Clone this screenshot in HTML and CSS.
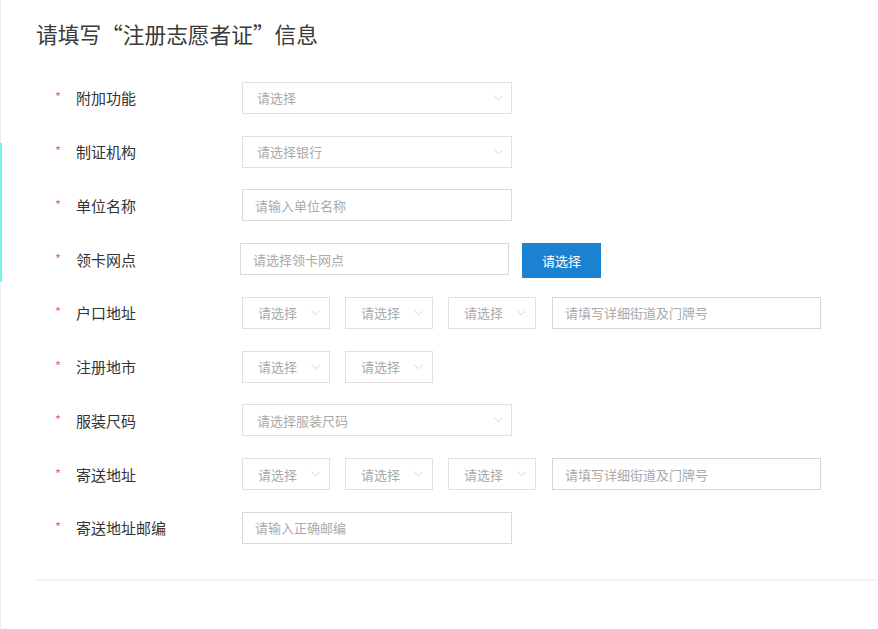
FILE: index.html
```html
<!DOCTYPE html>
<html lang="zh-CN">
<head>
<meta charset="utf-8">
<title>注册志愿者证</title>
<link rel="stylesheet" href="styles.css">
</head>
<body>
<div class="page">
  <div class="edge-mark"></div>
  <h1 class="title">请填写“注册志愿者证”信息</h1>
  <div class="form">
    <div class="row">
      <div class="label"><span class="star">*</span>附加功能</div>
      <div class="controls">
        <div class="select wide"><span>请选择</span><svg class="chev" viewBox="0 0 10 6"><polyline points="0.5,0.5 5,5 9.5,0.5"/></svg></div>
      </div>
    </div>
    <div class="row">
      <div class="label"><span class="star">*</span>制证机构</div>
      <div class="controls">
        <div class="select wide"><span>请选择银行</span><svg class="chev" viewBox="0 0 10 6"><polyline points="0.5,0.5 5,5 9.5,0.5"/></svg></div>
      </div>
    </div>
    <div class="row">
      <div class="label"><span class="star">*</span>单位名称</div>
      <div class="controls">
        <div class="input wide">请输入单位名称</div>
      </div>
    </div>
    <div class="row">
      <div class="label"><span class="star">*</span>领卡网点</div>
      <div class="controls">
        <div class="input wide shift">请选择领卡网点</div>
        <div class="btn">请选择</div>
      </div>
    </div>
    <div class="row">
      <div class="label"><span class="star">*</span>户口地址</div>
      <div class="controls">
        <div class="select small"><span>请选择</span><svg class="chev" viewBox="0 0 10 6"><polyline points="0.5,0.5 5,5 9.5,0.5"/></svg></div>
        <div class="select small"><span>请选择</span><svg class="chev" viewBox="0 0 10 6"><polyline points="0.5,0.5 5,5 9.5,0.5"/></svg></div>
        <div class="select small"><span>请选择</span><svg class="chev" viewBox="0 0 10 6"><polyline points="0.5,0.5 5,5 9.5,0.5"/></svg></div>
        <div class="input street">请填写详细街道及门牌号</div>
      </div>
    </div>
    <div class="row">
      <div class="label"><span class="star">*</span>注册地市</div>
      <div class="controls">
        <div class="select small"><span>请选择</span><svg class="chev" viewBox="0 0 10 6"><polyline points="0.5,0.5 5,5 9.5,0.5"/></svg></div>
        <div class="select small"><span>请选择</span><svg class="chev" viewBox="0 0 10 6"><polyline points="0.5,0.5 5,5 9.5,0.5"/></svg></div>
      </div>
    </div>
    <div class="row">
      <div class="label"><span class="star">*</span>服装尺码</div>
      <div class="controls">
        <div class="select wide"><span>请选择服装尺码</span><svg class="chev" viewBox="0 0 10 6"><polyline points="0.5,0.5 5,5 9.5,0.5"/></svg></div>
      </div>
    </div>
    <div class="row">
      <div class="label"><span class="star">*</span>寄送地址</div>
      <div class="controls">
        <div class="select small"><span>请选择</span><svg class="chev" viewBox="0 0 10 6"><polyline points="0.5,0.5 5,5 9.5,0.5"/></svg></div>
        <div class="select small"><span>请选择</span><svg class="chev" viewBox="0 0 10 6"><polyline points="0.5,0.5 5,5 9.5,0.5"/></svg></div>
        <div class="select small"><span>请选择</span><svg class="chev" viewBox="0 0 10 6"><polyline points="0.5,0.5 5,5 9.5,0.5"/></svg></div>
        <div class="input street">请填写详细街道及门牌号</div>
      </div>
    </div>
    <div class="row">
      <div class="label"><span class="star">*</span>寄送地址邮编</div>
      <div class="controls">
        <div class="input wide">请输入正确邮编</div>
      </div>
    </div>
  </div>
  <div class="divider"></div>
</div>
</body>
</html>
```

FILE: styles.css
```css
* { box-sizing: border-box; }
html, body { margin: 0; padding: 0; background: #fff; }
body {
  font-family: "Noto Sans CJK SC", "Noto Sans", sans-serif;
  color: #333;
}
.page {
  position: relative;
  min-height: 629px;
  border-left: 1px solid #eeeeee;
  padding-left: 35px;
  padding-right: 2px;
  padding-top: 19px;
}
.edge-mark {
  position: absolute;
  left: -1px;
  top: 143px;
  width: 2px;
  height: 139px;
  background: #6ff7ea;
}
.title {
  margin: 0;
  font-size: 21.7px;
  font-weight: normal;
  line-height: 30px;
  color: #3a3a3a;
}
.form {
  margin-top: 22px;
}
.row {
  height: 53.75px;
  display: flex;
  align-items: center;
}
.label {
  width: 206px;
  padding-left: 19px;
  font-size: 15px;
  color: #333;
  display: flex;
  align-items: center;
}
.star {
  color: #e8697a;
  font-size: 13px;
  width: 21px;
  position: relative;
  top: -1px;
}
.controls {
  display: flex;
  align-items: center;
  gap: 15px;
}
.select, .input {
  height: 32px;
  border: 1px solid #dadada;
  background: #fff;
  font-size: 13px;
  color: #aaa;
  display: flex;
  align-items: center;
}
.select {
  justify-content: space-between;
  border-color: #e0e0e0;
}
.select.wide { width: 270px; padding: 0 8px 0 14px; }
.select.small { width: 88px; padding: 0 9px 0 15px; }
.input { padding-left: 12px; }
.input.wide { width: 270px; }
.input.shift { margin-left: -2px; width: 269px; margin-right: -2px; }
.input.street { width: 269px; margin-left: 1px; border-color: #d6d6d6; }
.chev {
  width: 9px;
  height: 6px;
  fill: none;
  stroke: #cfcfcf;
  stroke-width: 1;
}
.btn {
  width: 79px;
  height: 35px;
  background: #1b82d1;
  color: #fff;
  font-size: 13px;
  display: flex;
  align-items: center;
  justify-content: center;
  position: relative;
  top: 1px;
}
.divider {
  margin-top: 24px;
  height: 2px;
  background: #f1f1f1;
}
```
